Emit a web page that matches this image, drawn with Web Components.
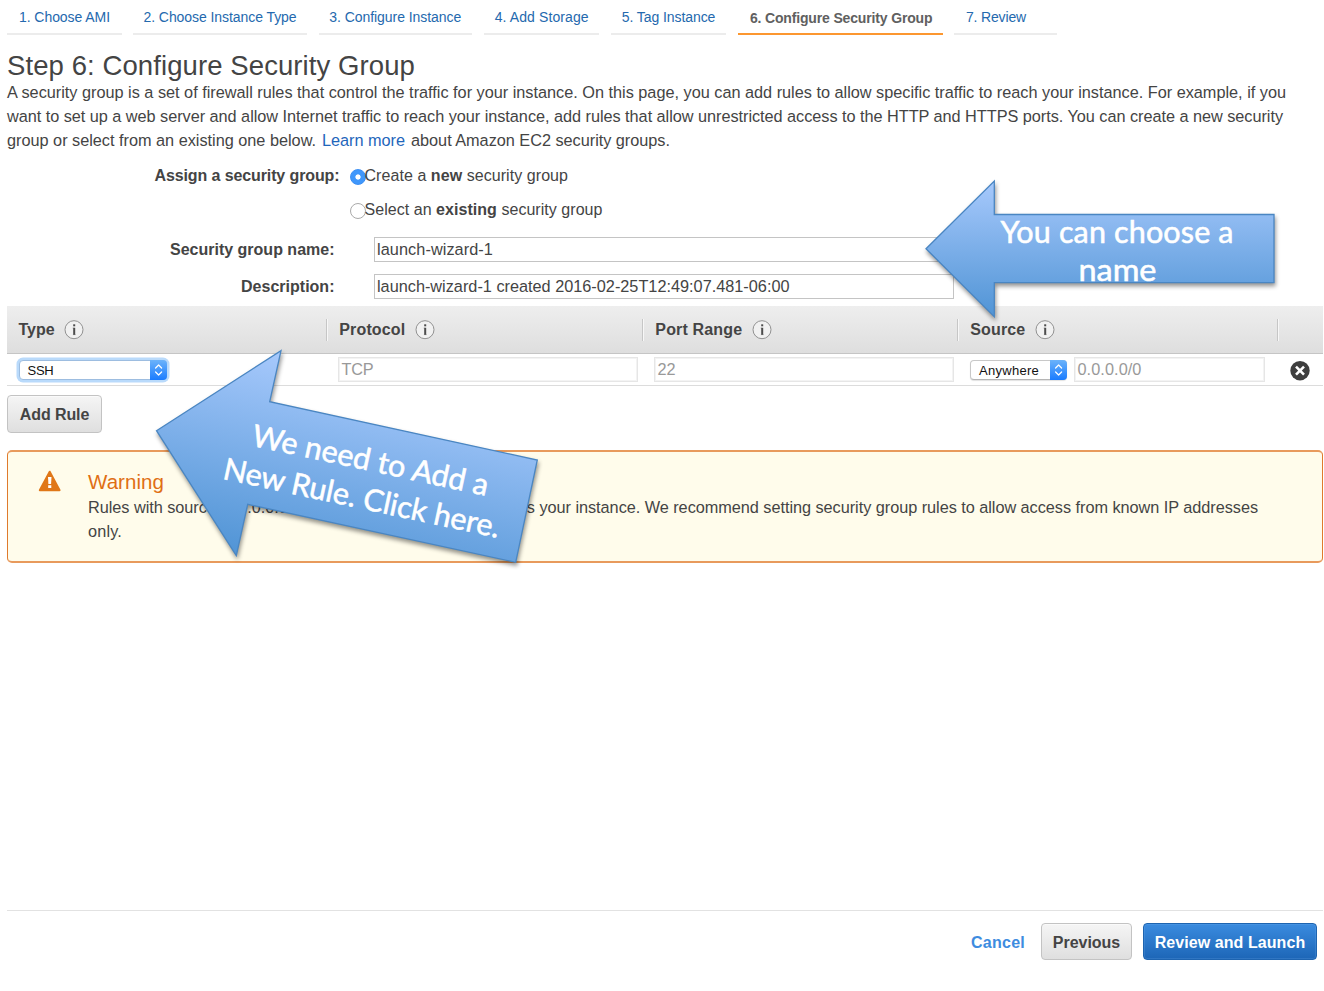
<!DOCTYPE html>
<html lang="en">
<head>
<meta charset="utf-8">
<title>Step 6: Configure Security Group</title>
<style>
html, body { margin: 0; background: #fff; }
body { height: 991px; overflow: hidden; font-family: "Liberation Sans", Arial, sans-serif; color: #444; }
</style>
</head>
<body>
<launch-wizard></launch-wizard>
<script>
const define = (name, html, after) => {
  const template = document.createElement('template');
  template.innerHTML = html;
  customElements.define(name, class extends HTMLElement {
    connectedCallback() {
      if (this.shadowRoot) return;
      this.attachShadow({ mode: 'open' }).append(template.content.cloneNode(true));
      if (after) after(this, this.shadowRoot);
    }
  });
};

// A single line of text tracked to a given measure.
define('text-run', `<style>
  :host { display: inline-block; white-space: nowrap; flex: none; }
</style><span><slot></slot></span>`, (el, root) => {
  const w = parseFloat(el.getAttribute('w'));
  const span = root.querySelector('span');
  const natural = span.getBoundingClientRect().width;
  const n = el.textContent.length;
  if (w && natural && n) {
    el.style.letterSpacing = ((w - natural) / n).toFixed(4) + 'px';
    el.style.width = w + 'px';
  }
});

define('wizard-tab', `<style>
  :host { display: block; box-sizing: border-box; height: 35px; padding: 3px 0 0 12px; border-bottom: 2px solid #ececec; font-size: 14px; line-height: 28px; color: #2469ae; flex: none; }
  :host([active]) { border-color: #fc9730; color: #606060; font-weight: bold; padding-top: 4px; }
</style><slot></slot>`, el => { el.style.width = el.getAttribute('width') + 'px'; });

define('radio-dot', `<style>
  :host { display: block; box-sizing: border-box; width: 16px; height: 16px; border-radius: 50%; border: 1px solid #aaa; background: #fff; flex: none; }
  :host([checked]) { border-color: #3b8ff5; background: radial-gradient(circle, #fff 0 2.2px, #3f97fb 3px); }
</style>`);

define('text-field', `<style>
  :host { display: flex; box-sizing: border-box; align-items: center; height: 25px; border: 1px solid #c4c4c4; background: #fff; padding-left: 2.5px; font-size: 16.3px; line-height: 23px; }
  :host([muted]) { border: 1.5px solid #e6e6e6; box-shadow: inset 0 0 0 1px #f3f3f3; color: #999; line-height: 22px; padding-left: 2.5px; }
</style><slot></slot>`);

define('select-box', `<style>
  :host { display: flex; box-sizing: border-box; height: 20px; border-radius: 4px; border: 1px solid #c8c8c8; border-bottom-color: #b5b5b5; background: #fff; color: #111; font-size: 13px; line-height: 19px; justify-content: space-between; padding-left: 8px; box-shadow: 0 1px 1px rgba(0,0,0,.12); flex: none; }
  :host([focused]) { border-color: #9dbde0; box-shadow: 0 0 0 2.5px #b9dafb; }
  svg { display: block; margin: -1px; flex: none; }
</style><slot></slot>
<svg width="17" height="20" viewBox="0 0 17 20"><defs><linearGradient id="g" x2="0" y2="1"><stop stop-color="#6cb3fa"/><stop offset="1" stop-color="#1a7cff"/></linearGradient></defs>
<path d="M0 0H13a4 4 0 0 1 4 4V16a4 4 0 0 1-4 4H0z" fill="url(#g)"/><path d="M5.6 8L8.6 5L11.6 8M5.6 12L8.6 15L11.6 12" fill="none" stroke="#fff" stroke-width="1.2" stroke-linecap="round" stroke-linejoin="round"/></svg>`,
  el => { el.style.width = el.getAttribute('width') + 'px'; });

define('info-icon', `<style>:host { display: block; width: 20px; height: 20px; flex: none; } svg { display: block; }</style>
<svg width="20" height="20" viewBox="0 0 20 20"><circle cx="10" cy="9.7" r="9" fill="#f1f1f1" stroke="#919191"/><path d="M8.6 8.1H10.4M8.9 14.6H11.7" fill="none" stroke="#999" stroke-width=".7"/><path d="M10.2 7.8V14.8" stroke="#4c4c4c" stroke-width="2"/><rect x="9.2" y="4.3" width="2" height="2" fill="#4c4c4c"/></svg>`);

define('column-head', `<style>
  :host { display: flex; box-sizing: border-box; align-items: center; height: 47px; font-size: 16px; font-weight: bold; line-height: 24px; gap: 9.5px; position: relative; }
  i { width: 1px; height: 22px; background: #c6c6c6; box-shadow: 1px 0 #f7f7f7; flex: none; margin-right: 2.8px; }
  :host([first]) i { display: none; }
  ::slotted(text-run) { padding-top: 1px; }
</style><i></i><slot></slot>`);

define('push-button', `<style>
  :host { display: flex; box-sizing: border-box; height: 38px; border: 1px solid #c3c3c3; border-radius: 4px; background: linear-gradient(#f5f5f5, #dfdfdf); font-size: 16px; font-weight: bold; line-height: 24px; align-items: center; justify-content: center; padding-top: 2px; color: #444; flex: none; box-shadow: inset 0 1px rgba(255,255,255,.5); }
  :host([primary]) { background: linear-gradient(#3a8bdf, #1d66b7); border-color: #1e64b0; color: #fff; box-shadow: inset 0 0 0 1px rgba(120,180,240,.2); }
</style><slot></slot>`, el => { el.style.width = el.getAttribute('width') + 'px'; });

define('warning-box', `<style>
  :host { display: flex; box-sizing: border-box; height: 113px; border-style: solid; border-width: 2px 1px; border-color: #e89a5c #df7a2c; border-radius: 5px; background: #fffceb; padding: 17px 0 0 30px; }
  svg { display: block; margin-top: 1px; flex: none; }
  div { margin-left: 26px; }
  h2 { margin: 0; height: 26px; font: 20.5px/26px "Liberation Sans", Arial, sans-serif; color: #df6f14; }
  p { margin: 0; font-size: 16.3px; line-height: 24px; }
</style>
<svg width="24" height="22" viewBox="0 0 24 22"><path d="M11.7 1.7L21.6 20.2H1.8z" fill="#e07718" stroke="#e07718" stroke-width="2" stroke-linejoin="round"/><path d="M10 7H13.5L13.1 14H10.4z" fill="#fff"/><rect x="10.2" y="15.2" width="3.1" height="2.8" fill="#fff"/></svg>
<div><h2><text-run w="76">Warning</text-run></h2>
<p><text-run w="1170">Rules with source of 0.0.0.0/0 allow all IP addresses to access your instance. We recommend setting security group rules to allow access from known IP addresses</text-run><br><text-run w="34">only.</text-run></p></div>`);

const arrowStyle = `<style>
  :host { display: block; position: absolute; }
  svg { display: block; overflow: visible; }
  polygon { stroke: #4a86c2; stroke-width: 1.3; fill: url(#fill); filter: drop-shadow(1px 3px 2.2px rgba(0,0,0,.42)); }
  text { font: 30.5px Lato, "Open Sans", sans-serif; fill: #fff; stroke: #fff; stroke-width: .55; }
</style>`;

define('name-callout', arrowStyle + `<style>:host { left: 920px; top: 175px; }</style>
<svg width="360" height="150" viewBox="920 175 360 150"><defs><linearGradient id="fill" gradientUnits="userSpaceOnUse" x1="0" y1="181" x2="0" y2="317"><stop stop-color="#a7c9fc"/><stop offset="1" stop-color="#5094d5"/></linearGradient></defs>
<polygon points="926,248.7 994.3,181 994.3,214.5 1274,214.5 1274,282.7 994.3,282.7 994.3,316.7"/>
<text x="1000.5" y="243" textLength="233">You can choose a</text><text x="1078.5" y="281" textLength="78" lengthAdjust="spacingAndGlyphs">name</text></svg>`);

define('rule-callout', arrowStyle + `<style>:host { left: 150px; top: 345px; }</style>
<svg width="395" height="225" viewBox="150 345 395 225"><defs><linearGradient id="fill" gradientUnits="userSpaceOnUse" x1="281" y1="351" x2="237" y2="556"><stop stop-color="#a7c9fc"/><stop offset="1" stop-color="#5094d5"/></linearGradient></defs>
<polygon points="156.5,430.7 281,350.7 269.7,401.7 537.3,460 515.7,562.3 247.7,504.3 236.3,555.7"/>
<text transform="translate(250.5 445.4) rotate(12.1)" textLength="241">We need to Add a</text><text transform="translate(221.7 478.8) rotate(12.1)" textLength="282">New Rule. Click here.</text></svg>`);

define('rules-table', `<style>
  :host { display: block; }
  .head, .row { display: grid; grid-template-columns: 319px 316px 315px 320px 46px; }
  .head { height: 47px; background: linear-gradient(#eeeeee, #dedede); border-bottom: 1px solid #c5c5c5; }
  .head column-head[first] { padding-left: 11.5px; }
  .row { height: 31px; align-items: center; border-bottom: 1px solid #dcdcdc; }
  .row > * { margin-left: 12px; }
  .row > select-box { margin-left: 11.5px; }
  .source { display: flex; align-items: center; gap: 7px; }
  .row .source { margin-left: 13px; }
  .row text-field { width: 300px; margin-top: -1px; }
  .row .source text-field { width: 191px; }
</style>
<div class="head">
  <column-head first><text-run w="36">Type</text-run><info-icon></info-icon></column-head>
  <column-head><text-run w="66">Protocol</text-run><info-icon></info-icon></column-head>
  <column-head><text-run w="87">Port Range</text-run><info-icon></info-icon></column-head>
  <column-head><text-run w="55">Source</text-run><info-icon></info-icon></column-head>
  <column-head></column-head>
</div>
<div class="row">
  <select-box focused width="148"><text-run w="26">SSH</text-run></select-box>
  <text-field muted><text-run w="32">TCP</text-run></text-field>
  <text-field muted><text-run w="18">22</text-run></text-field>
  <div class="source"><select-box width="97"><text-run w="60">Anywhere</text-run></select-box><text-field muted><text-run w="64">0.0.0.0/0</text-run></text-field></div>
  <svg width="22" height="22" viewBox="0 0 22 22"><circle cx="11" cy="11.7" r="9.7" fill="#3e3e3e"/><path d="M7 7.7L15 15.7M15 7.7L7 15.7" stroke="#fff" stroke-width="2.6"/></svg>
</div>`);

define('launch-wizard', `<style>
  :host { display: flex; flex-direction: column; position: relative; box-sizing: border-box; width: 1324px; height: 991px; padding: 0 1px 0 7px; }
  nav { display: flex; gap: 11.6px; height: 51px; flex: none; }
  h1 { margin: 0; height: 30px; font: 27.5px/29px "Liberation Sans", Arial, sans-serif; }
  p { margin: -1px 0 1px; font-size: 16.3px; line-height: 24px; height: 72px; }
  a { color: #1f66bb; }
  form { display: grid; grid-template-columns: 333px 1fr; grid-template-rows: 34px 39px 37px 25px; margin: 11px 0 7px; font-size: 16px; line-height: 24px; height: 135px; align-content: start; }
  form > * { align-self: start; }
  label { text-align: right; font-weight: bold; font-size: 16px; }
  label:not(.field) { padding-right: .5px; }
  label.field { padding-right: 5.5px; line-height: 26px; }
  .choice { display: flex; align-items: center; height: 24px; padding-left: 9.5px; }
  .choice radio-dot { margin-top: 2px; margin-right: -1px; }
  form text-field { width: 580px; margin-left: 33.5px; }
  .add { margin-top: 9px; }
  warning-box { margin-top: 17px; }
  footer { margin-top: auto; height: 80px; border-top: 1px solid #e2e2e2; display: flex; justify-content: flex-end; align-items: flex-start; padding: 12px 6px 0 0; box-sizing: border-box; margin-bottom: 1px; }
  .cancel { font-size: 16px; font-weight: bold; line-height: 38px; color: #3e8ce0; margin-right: 16px; padding-top: 1px; }
  footer push-button { height: 37px; }
  footer push-button + push-button { margin-left: 11px; }
</style>
<nav>
  <wizard-tab width="115"><text-run w="91">1. Choose AMI</text-run></wizard-tab>
  <wizard-tab width="174" style="margin-left:-.6px;padding-left:10.5px"><text-run w="153">2. Choose Instance Type</text-run></wizard-tab>
  <wizard-tab width="153" style="padding-left:10.7px"><text-run w="132">3. Configure Instance</text-run></wizard-tab>
  <wizard-tab width="115.5" style="margin-left:.5px;padding-left:11px"><text-run w="94">4. Add Storage</text-run></wizard-tab>
  <wizard-tab width="115.5" style="padding-left:11px"><text-run w="93.5">5. Tag Instance</text-run></wizard-tab>
  <wizard-tab width="205" active><text-run w="182.5">6. Configure Security Group</text-run></wizard-tab>
  <wizard-tab width="103" style="padding-left:11.5px"><text-run w="60">7. Review</text-run></wizard-tab>
</nav>
<h1><text-run w="408">Step 6: Configure Security Group</text-run></h1>
<p><text-run w="1279">A security group is a set of firewall rules that control the traffic for your instance. On this page, you can add rules to allow specific traffic to reach your instance. For example, if you</text-run><br>
<text-run w="1276">want to set up a web server and allow Internet traffic to reach your instance, add rules that allow unrestricted access to the HTTP and HTTPS ports. You can create a new security</text-run><br>
<text-run w="309">group or select from an existing one below.</text-run><a style="margin:0 6px 0 6px"><text-run w="83">Learn more</text-run></a><text-run w="259">about Amazon EC2 security groups.</text-run></p>
<form>
  <label><text-run w="185">Assign a security group:</text-run></label>
  <div class="choice"><radio-dot checked></radio-dot><text-run w="203.5">Create a <b>new</b> security group</text-run></div>
  <span></span>
  <div class="choice"><radio-dot></radio-dot><text-run w="238">Select an <b>existing</b> security group</text-run></div>
  <label class="field"><text-run w="164.5">Security group name:</text-run></label>
  <text-field><text-run w="116">launch-wizard-1</text-run></text-field>
  <label class="field"><text-run w="93.5">Description:</text-run></label>
  <text-field><text-run w="412.5">launch-wizard-1 created 2016-02-25T12:49:07.481-06:00</text-run></text-field>
</form>
<rules-table></rules-table>
<push-button class="add" width="95"><text-run w="69.5">Add Rule</text-run></push-button>
<warning-box></warning-box>
<footer>
  <span class="cancel"><text-run w="54">Cancel</text-run></span>
  <push-button width="91"><text-run w="67.5">Previous</text-run></push-button>
  <push-button primary width="174"><text-run w="150.5">Review and Launch</text-run></push-button>
</footer>
<name-callout></name-callout>
<rule-callout></rule-callout>`);
</script>
</body>
</html>
